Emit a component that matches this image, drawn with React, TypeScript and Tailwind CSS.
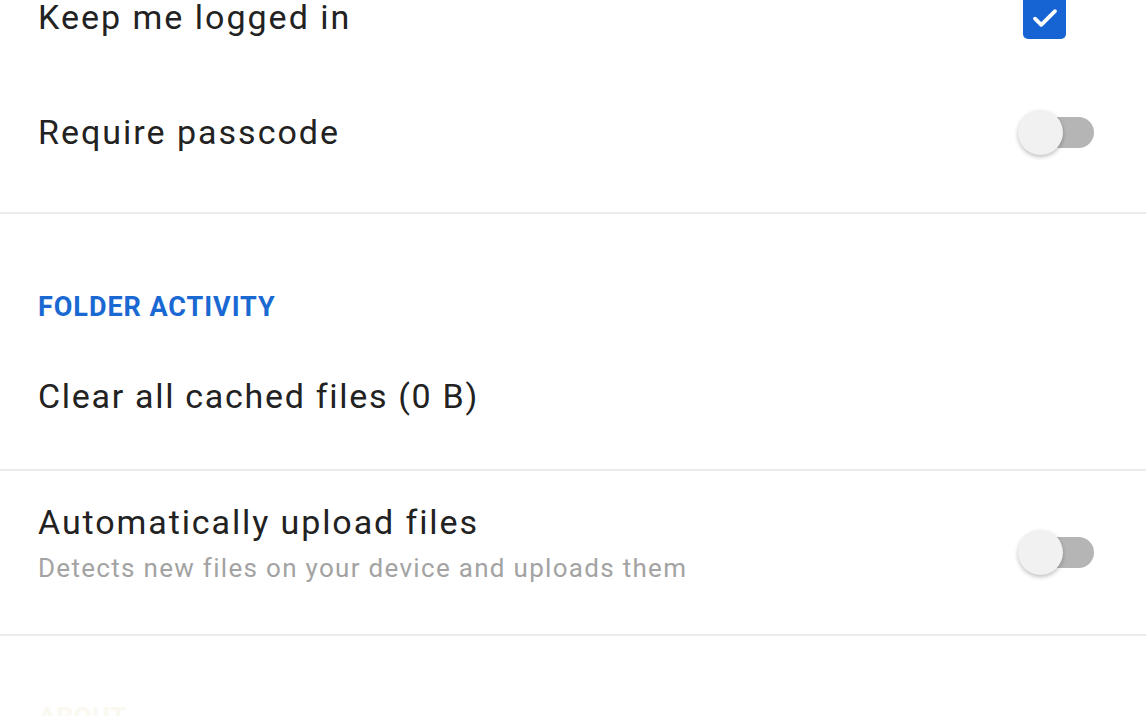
import React from 'react';

function Toggle() {
  return (
    <div className="relative w-[78px] h-[48px] flex items-center">
      <div className="absolute left-[6px] right-[2px] h-[31px] rounded-full bg-[#b5b5b5]" />
      <div className="relative w-[45px] h-[45px] rounded-full bg-[#f1f1f1] shadow-[0_2px_4px_rgba(0,0,0,0.25)]" />
    </div>
  );
}

function Checkbox() {
  return (
    <div className="w-[43px] h-[43px] rounded-[5px] bg-[#1664d4] flex items-center justify-center">
      <svg width="30" height="30" viewBox="0 0 24 24" fill="none" stroke="white" strokeWidth="3" strokeLinecap="round" strokeLinejoin="round">
        <path d="M4 12.5l5 5L20 6.5" />
      </svg>
    </div>
  );
}

function Divider() {
  return <div className="h-[2px] bg-[#ebebeb]" />;
}

export default function App() {
  return (
    <div className="w-[1146px] h-[716px] overflow-hidden bg-white text-[#222222]" style={{ fontFamily: 'Roboto, "Noto Sans", sans-serif' }}>
      <div className="-mt-[40px]">
        {/* Account */}
        <div className="h-[115px] flex items-center justify-between pl-[38px] pr-[80px]">
          <span className="text-[34px] tracking-[2px]">Keep me logged in</span>
          <Checkbox />
        </div>
        <div className="h-[115px] flex items-center justify-between pl-[38px] pr-[50px]">
          <span className="text-[34px] tracking-[2px]">Require passcode</span>
          <Toggle />
        </div>
        <div className="h-[22px]" />
        <Divider />

        {/* Folder activity */}
        <div className="pt-[77px] pl-[38px] h-[109px] flex items-center">
          <span className="text-[27px] font-bold tracking-[0.95px] text-[#1a68d2]">FOLDER ACTIVITY</span>
        </div>
        <div className="h-[146px] flex items-center pl-[38px]">
          <span className="text-[34px] tracking-[1.7px]">Clear all cached files (0 B)</span>
        </div>
        <Divider />
        <div className="h-[163px] flex justify-between pl-[38px] pr-[50px]">
          <div className="pt-[31px] flex flex-col">
            <span className="text-[34px] leading-[40px] tracking-[1.9px]">Automatically upload files</span>
            <span className="mt-[6px] text-[26px] leading-[40px] tracking-[1.3px] text-[#a3a3a3]">Detects new files on your device and uploads them</span>
          </div>
          <div className="self-center">
            <Toggle />
          </div>
        </div>
        <Divider />
        <div className="pt-[62px] pl-[38px]">
          <span className="text-[27px] font-bold text-[#faf8f0]">ABOUT</span>
        </div>
      </div>
    </div>
  );
}
